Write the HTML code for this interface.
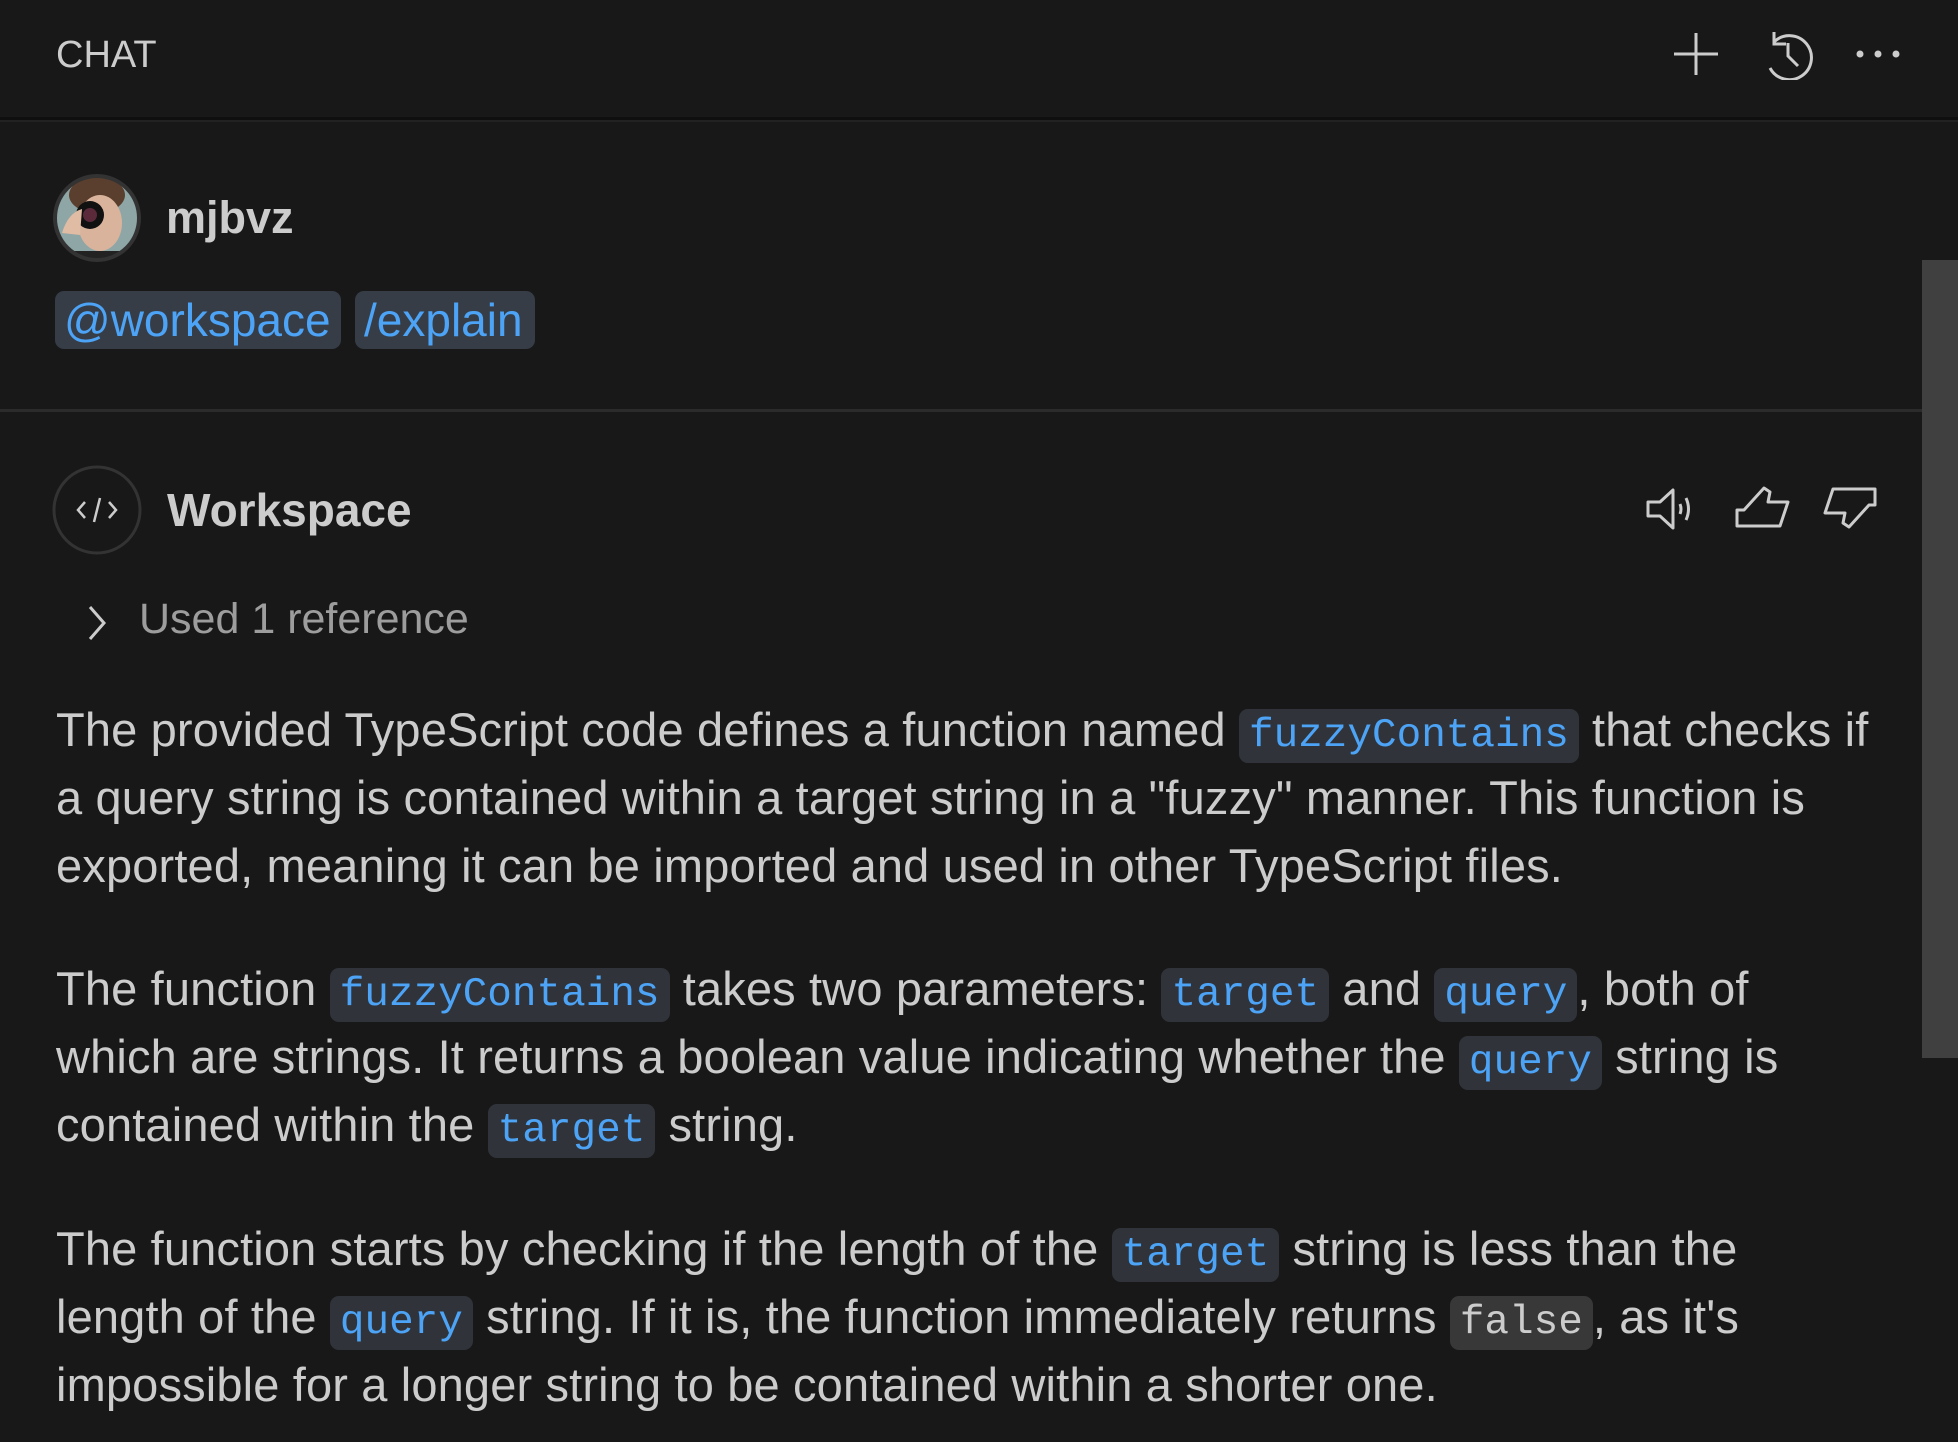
<!DOCTYPE html>
<html><head><meta charset="utf-8"><style>
html,body{margin:0;padding:0;background:#181818;width:1958px;height:1442px;overflow:hidden;font-family:"Liberation Sans",sans-serif;color:#cccccc}
.abs{position:absolute}
.hdr{left:0;top:0;width:1958px;height:117px;background:#181818;border-bottom:3px solid #0f0f0f}
.hdr2{left:0;top:120px;width:1958px;height:2px;background:#222}
.title{left:56px;top:34px;font-size:38px;color:#cccccc}
.pill{top:291px;height:58px;background:#363d47;border-radius:9px;color:#4da3f5;font-size:46px;line-height:58px;padding:0 9px;box-sizing:border-box;white-space:nowrap}
.line{position:absolute;left:56px;white-space:nowrap;font-size:47px;line-height:68px;color:#cccccc;letter-spacing:0.15px}
code{font-family:"Liberation Mono",monospace;font-size:41px;color:#4da3f5;background:#30343a;border-radius:9px;padding:4px 10px;letter-spacing:0}
code.g{color:#cccccc;background:#383838}
</style></head><body>
<div class="abs hdr"></div>
<div class="abs hdr2"></div>
<div class="abs title">CHAT</div>
<svg class="abs" style="left:1670px;top:30px" width="240" height="50" viewBox="0 0 240 50">
<g stroke="#cccccc" stroke-width="3" fill="none">
<path d="M26 3V45M4 24H48"/>
<path d="M104 12A22 22 0 1 1 100 38"/><path d="M104 2V14H116"/><path d="M118 13V26L128 36"/>
</g>
<g fill="#cccccc"><circle cx="190" cy="24" r="3.5"/><circle cx="208" cy="24" r="3.5"/><circle cx="226" cy="24" r="3.5"/></g>
</svg>
<svg class="abs" style="left:52px;top:173px" width="90" height="90" viewBox="0 0 90 90">
<defs><clipPath id="c"><circle cx="45" cy="45" r="42"/></clipPath></defs>
<g clip-path="url(#c)">
<rect width="90" height="90" fill="#8fa6a6"/>
<ellipse cx="45" cy="22" rx="28" ry="18" fill="#5a3f2e"/>
<ellipse cx="48" cy="50" rx="22" ry="28" fill="#d9b39c"/>
<rect x="20" y="78" width="60" height="20" fill="#222"/>
<circle cx="38" cy="42" r="14" fill="#111"/><circle cx="38" cy="42" r="7" fill="#5a2a3a"/>
<path d="M10 60Q16 40 30 36L28 62Z" fill="#e0bca4"/>
</g>
<circle cx="45" cy="45" r="42" fill="none" stroke="#333" stroke-width="4"/>
</svg>
<div class="abs" style="left:166px;top:192px;font-size:45px;font-weight:bold;color:#cccccc">mjbvz</div>
<div class="abs pill" style="left:55px;width:286px">@workspace</div>
<div class="abs pill" style="left:355px;width:180px">/explain</div>
<div class="abs" style="left:0;top:409px;width:1958px;height:3px;background:#2b2b2b"></div>
<div class="abs" style="left:1922px;top:260px;width:36px;height:798px;background:#404040"></div>
<svg class="abs" style="left:52px;top:465px" width="90" height="90" viewBox="0 0 90 90">
<circle cx="45" cy="45" r="43" fill="none" stroke="#333" stroke-width="3"/>
<g stroke="#cccccc" stroke-width="2.5" fill="none"><path d="M33 37L26 45L33 53M57 37L64 45L57 53M48 33L42 57"/></g>
</svg>
<div class="abs" style="left:167px;top:483px;font-size:46px;font-weight:bold;color:#cccccc">Workspace</div>
<svg class="abs" style="left:1640px;top:480px" width="260" height="60" viewBox="0 0 260 60">
<g stroke="#cccccc" stroke-width="3" fill="none" stroke-linejoin="round">
<path d="M8 22H20L33 10V48L20 36H8Z"/><path d="M40 24Q42 29 40 34M46 18Q51 29 46 40"/>
<path d="M97 46H140L148 22H128L130 12L124 8L104 30H97Z"/>
<path d="M235 9H193L185 33H205L203 43L209 47L229 25H235Z"/>
</g></svg>
<svg class="abs" style="left:86px;top:604px" width="24" height="38" viewBox="0 0 24 38"><path d="M4 3L18 19L4 35" stroke="#cccccc" stroke-width="3" fill="none"/></svg>
<div class="abs" style="left:139px;top:595px;font-size:43px;color:#9d9d9d">Used 1 reference</div>

<div class="line" style="top:696px">The provided TypeScript code defines a function named <code>fuzzyContains</code> that checks if</div>
<div class="line" style="top:764px">a query string is contained within a target string in a "fuzzy" manner. This function is</div>
<div class="line" style="top:832px">exported, meaning it can be imported and used in other TypeScript files.</div>

<div class="line" style="top:955px">The function <code>fuzzyContains</code> takes two parameters: <code>target</code> and <code>query</code>, both of</div>
<div class="line" style="top:1023px">which are strings. It returns a boolean value indicating whether the <code>query</code> string is</div>
<div class="line" style="top:1091px">contained within the <code>target</code> string.</div>

<div class="line" style="top:1215px">The function starts by checking if the length of the <code>target</code> string is less than the</div>
<div class="line" style="top:1283px">length of the <code>query</code> string. If it is, the function immediately returns <code class="g">false</code>, as it's</div>
<div class="line" style="top:1351px">impossible for a longer string to be contained within a shorter one.</div>
</body></html>
